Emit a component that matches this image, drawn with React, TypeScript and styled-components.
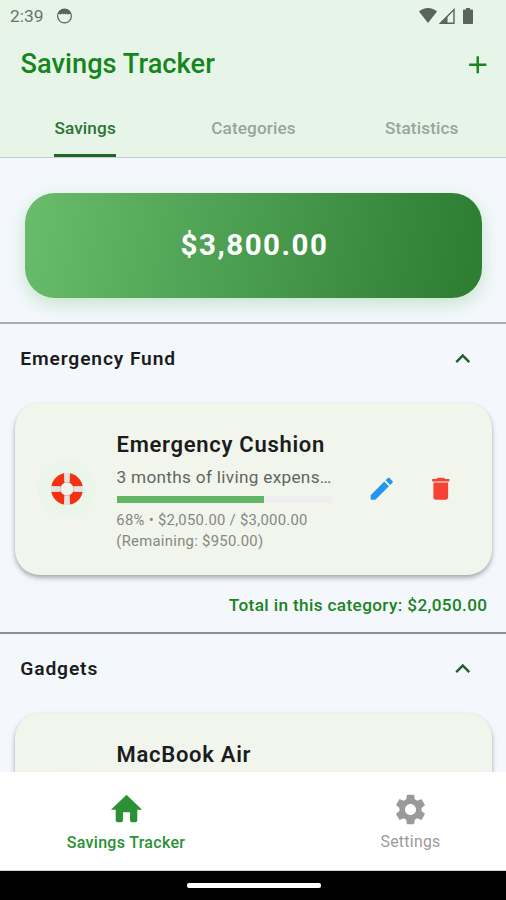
import React from "react";
import styled, { createGlobalStyle } from "styled-components";
import { MdAdd, MdDelete, MdEdit, MdExpandLess, MdSettings } from "react-icons/md";

const GlobalStyle = createGlobalStyle`
  * { box-sizing: border-box; }
  body { margin: 0; background: #f4f8fc; }
`;

const Screen = styled.div`
  width: 506px;
  height: 900px;
  display: flex;
  flex-direction: column;
  overflow: hidden;
  background: #f4f8fc;
  font-family: Roboto, "Liberation Sans", sans-serif;
  color: #1b1c1e;
`;

const Header = styled.header`
  flex: none;
  height: 158px;
  background: #e7f5e9;
  border-bottom: 1px solid #c6d0cb;
`;

const StatusBar = styled.div`
  height: 32px;
  display: flex;
  align-items: center;
  justify-content: space-between;
  padding: 0 33.5px 1px 10px;
  color: #5a635c;
`;

const StatusGroup = styled.div<{ $gap: number }>`
  display: flex;
  align-items: center;
  gap: ${(p) => p.$gap}px;
`;

const Clock = styled.span`
  font-size: 17.4px;
  line-height: 20px;
  color: #6a746c;
`;

const AppBar = styled.div`
  height: 64px;
  display: flex;
  align-items: center;
  justify-content: space-between;
  padding: 1px 14px 0 20.5px;
`;

const Title = styled.h1`
  margin: 0 0 1px;
  font-size: 27.2px;
  line-height: 32px;
  font-weight: 500;
  letter-spacing: 0.04px;
  color: #14861b;
`;

const IconButton = styled.button<{ $color: string }>`
  display: flex;
  padding: 0;
  border: 0;
  background: none;
  color: ${(p) => p.$color};
  font-size: 29.5px;
`;

const Tabs = styled.nav`
  height: 61px;
  display: grid;
  grid-template-columns: repeat(3, 1fr);
  justify-items: center;
  padding-left: 1px;
`;

const Tab = styled.div<{ $active?: boolean }>`
  height: 61px;
  padding-top: 22px;
  border-bottom: 3px solid ${(p) => (p.$active ? "#20652a" : "transparent")};
  border-radius: 2px 2px 0 0;
  font-size: 17.2px;
  line-height: 20px;
  font-weight: 500;
  letter-spacing: 0.12px;
  color: ${(p) => (p.$active ? "#2b7433" : "#98a59b")};
`;

const Content = styled.main`
  flex: 1;
  min-height: 0;
  overflow: hidden;
`;

const BalanceArea = styled.div`
  height: 164px;
  padding: 34.5px 24px 0 25px;
`;

const Balance = styled.div`
  height: 105px;
  display: flex;
  align-items: center;
  justify-content: center;
  padding-left: 2px;
  border-radius: 30px;
  background: linear-gradient(100deg, #67bb6a 2%, #2e7e33 96%);
  box-shadow: 0 6px 18px rgba(76, 175, 80, 0.28);
  color: #fff;
  font-size: 29.5px;
  font-weight: 700;
  letter-spacing: 1.5px;
`;

const Section = styled.section<{ $line: string }>`
  height: 310px;
  border-top: 2px solid ${(p) => p.$line};
`;

const SectionHead = styled.div`
  height: 69px;
  display: flex;
  align-items: center;
  justify-content: space-between;
  padding: 1px 29px 0 20.3px;
`;

const SectionTitle = styled.h2`
  margin: 0 0 1px;
  font-size: 19.2px;
  line-height: 24px;
  font-weight: 600;
  letter-spacing: 0.88px;
`;

const Card = styled.article`
  height: 172px;
  margin: 10px 14px 0 15px;
  display: flex;
  border-radius: 25px;
  background: #f1f5ec;
  box-shadow: 0 3px 5px rgba(40, 45, 50, 0.34), 0 1px 3px rgba(40, 45, 50, 0.08);
`;

const Emblem = styled.div`
  align-self: center;
  width: 58px;
  height: 58px;
  margin: 0 21px 0 23px;
  display: flex;
  align-items: center;
  justify-content: center;
  border-radius: 50%;
  background: #ebf5ea;
`;

const Details = styled.div`
  width: 215px;
  padding-top: 27px;
`;

const GoalName = styled.h3`
  margin: 0 0 0 -0.5px;
  font-size: 22px;
  line-height: 30px;
  font-weight: 600;
  letter-spacing: 0.72px;
  white-space: nowrap;
`;

const GoalNote = styled.p`
  margin: 4px 0 6px -0.5px;
  font-size: 17.2px;
  line-height: 26px;
  letter-spacing: 0.31px;
  white-space: nowrap;
  color: #62665f;
`;

const Track = styled.div`
  height: 7px;
  background: #eeeeee;
`;

const Fill = styled.div`
  height: 7px;
  background: #62b766;
`;

const GoalStats = styled.p`
  margin: 7px 0 0 -0.7px;
  font-size: 14.8px;
  line-height: 21px;
  letter-spacing: 0.3px;
  white-space: nowrap;
  color: #858883;
`;

const Actions = styled.div`
  display: flex;
  align-items: center;
  gap: 29.5px;
  margin-left: 34.5px;
`;

const CategoryTotal = styled.div`
  padding: 19px 18.5px 0 0;
  text-align: right;
  font-size: 17.2px;
  line-height: 22px;
  font-weight: 500;
  letter-spacing: 0.36px;
  color: #1b8222;
`;

const BottomNav = styled.nav`
  flex: none;
  height: 99px;
  padding-top: 19px;
  display: flex;
  justify-content: space-between;
  background: #fff;
  border-bottom: 1px solid #d0d0d0;
`;

const NavItem = styled.div<{ $active?: boolean }>`
  width: ${(p) => (p.$active ? 252 : 191)}px;
  display: flex;
  flex-direction: column;
  align-items: center;
  color: ${(p) => (p.$active ? "#2b9135" : "#9a9a9a")};
  font-size: ${(p) => (p.$active ? 16 : 15.8)}px;
  line-height: 20px;
  font-weight: ${(p) => (p.$active ? 500 : 400)};
  letter-spacing: 0.3px;
`;

const NavLabel = styled.span<{ $active?: boolean }>`
  margin-top: ${(p) => (p.$active ? 5 : 4)}px;
`;

const GestureBar = styled.div`
  flex: none;
  height: 29px;
  display: flex;
  justify-content: center;
  padding: 12px 0 0 1px;
  background: #000;
`;

const GestureHandle = styled.div`
  width: 134px;
  height: 5px;
  border-radius: 2px;
  background: #fff;
`;

const FaceIcon = () => (
  <svg width="17" height="18" viewBox="0 0 18 18">
    <circle cx="9" cy="9" r="7.3" fill="none" stroke="currentColor" strokeWidth="1.3" />
    <path d="M2 7.2C3.3 3 6 1.6 9 1.6s5.7 1.4 7 5.6l-2.5-.3-.8 1-1.4-1.6-1.3 1.3L9 6.3 7.8 7.500 6.300 6.200 5.200 7.900 4.300 7z" fill="currentColor" />
  </svg>
);

const WifiIcon = () => (
  <svg width="18" height="15" viewBox="0 0 18 15">
    <path d="M9 15 0 3.6C2.4 1.3 5.5 0 9 0s6.6 1.3 9 3.6z" fill="currentColor" />
  </svg>
);

const SignalIcon = () => (
  <svg width="16" height="16" viewBox="0 0 16 16">
    <path d="M1.6 15.2H15V1.6z" fill="none" stroke="currentColor" strokeWidth="1.4" />
    <path d="M.3 15.8H8.5V7.6z" fill="currentColor" />
  </svg>
);

const BatteryIcon = () => (
  <svg width="10" height="16" viewBox="0 0 10 16">
    <path d="M3 0h4v1.6h2.2q.8 0 .8.8V15.2q0 .8-.8.8H.8Q0 16 0 15.2V2.4q0-.8.8-.8H3z" fill="currentColor" />
  </svg>
);

const LifeRing = () => (
  <svg width="34" height="34" viewBox="0 0 34 34">
    <circle cx="17" cy="17" r="11.2" fill="none" stroke="#f5320f" strokeWidth="9.4" />
    <path d="M14 1h6l-.3 9.8h-5.4zM14 33h6l-.3-9.8h-5.4zM1 14v6l9.8-.3v-5.4zM33 14v6l-9.8-.3v-5.4z" fill="#dfe3e3" />
    <circle cx="17" cy="17" r="6.6" fill="#eef5ed" stroke="#c9482f" strokeOpacity=".35" strokeWidth=".6" />
  </svg>
);

const HomeIcon = () => (
  <svg width="37" height="37" viewBox="0 0 24 24" fill="currentColor">
    <path d="M9.7 19.2v-5q0-.4.4-.4h3.8q.4 0 .4.4v5c0 .55.45 1 1 1h2.7c.55 0 1-.45 1-1V12.2h2.7q.4 0 .1-.35L12.3 2.8q-.3-.25-.6 0L2.2 11.85q-.3.35.1.35H5v7c0 .55.45 1 1 1h2.7c.55 0 1-.45 1-1z" />
  </svg>
);

export default function App() {
  return (
    <>
      <GlobalStyle />
      <Screen>
        <Header>
          <StatusBar>
            <StatusGroup $gap={12}>
              <Clock>2:39</Clock>
              <FaceIcon />
            </StatusGroup>
            <StatusGroup $gap={2}>
              <WifiIcon />
              <StatusGroup $gap={8}>
                <SignalIcon />
                <BatteryIcon />
              </StatusGroup>
            </StatusGroup>
          </StatusBar>
          <AppBar>
            <Title>Savings Tracker</Title>
            <IconButton $color="#14861b" aria-label="Add"><MdAdd /></IconButton>
          </AppBar>
          <Tabs>
            <Tab $active>Savings</Tab>
            <Tab>Categories</Tab>
            <Tab>Statistics</Tab>
          </Tabs>
        </Header>
        <Content>
          <BalanceArea>
            <Balance>$3,800.00</Balance>
          </BalanceArea>
          <Section $line="#a9afb0">
            <SectionHead>
              <SectionTitle>Emergency Fund</SectionTitle>
              <IconButton $color="#20602a" aria-label="Collapse"><MdExpandLess /></IconButton>
            </SectionHead>
            <Card>
              <Emblem><LifeRing /></Emblem>
              <Details>
                <GoalName>Emergency Cushion</GoalName>
                <GoalNote>3 months of living expens…</GoalNote>
                <Track><Fill style={{ width: `${(2050 / 3000) * 100}%` }} /></Track>
                <GoalStats>
                  68% • $2,050.00 / $3,000.00
                  <br />
                  (Remaining: $950.00)
                </GoalStats>
              </Details>
              <Actions>
                <IconButton $color="#2196f3" aria-label="Edit"><MdEdit /></IconButton>
                <IconButton $color="#f44336" aria-label="Delete"><MdDelete /></IconButton>
              </Actions>
            </Card>
            <CategoryTotal>Total in this category: $2,050.00</CategoryTotal>
          </Section>
          <Section $line="#8b9092">
            <SectionHead>
              <SectionTitle>Gadgets</SectionTitle>
              <IconButton $color="#20602a" aria-label="Collapse"><MdExpandLess /></IconButton>
            </SectionHead>
            <Card>
              <Emblem />
              <Details>
                <GoalName>MacBook Air</GoalName>
              </Details>
            </Card>
          </Section>
        </Content>
        <BottomNav>
          <NavItem $active>
            <HomeIcon />
            <NavLabel $active>Savings Tracker</NavLabel>
          </NavItem>
          <NavItem>
            <MdSettings size={37} />
            <NavLabel>Settings</NavLabel>
          </NavItem>
        </BottomNav>
        <GestureBar>
          <GestureHandle />
        </GestureBar>
      </Screen>
    </>
  );
}
